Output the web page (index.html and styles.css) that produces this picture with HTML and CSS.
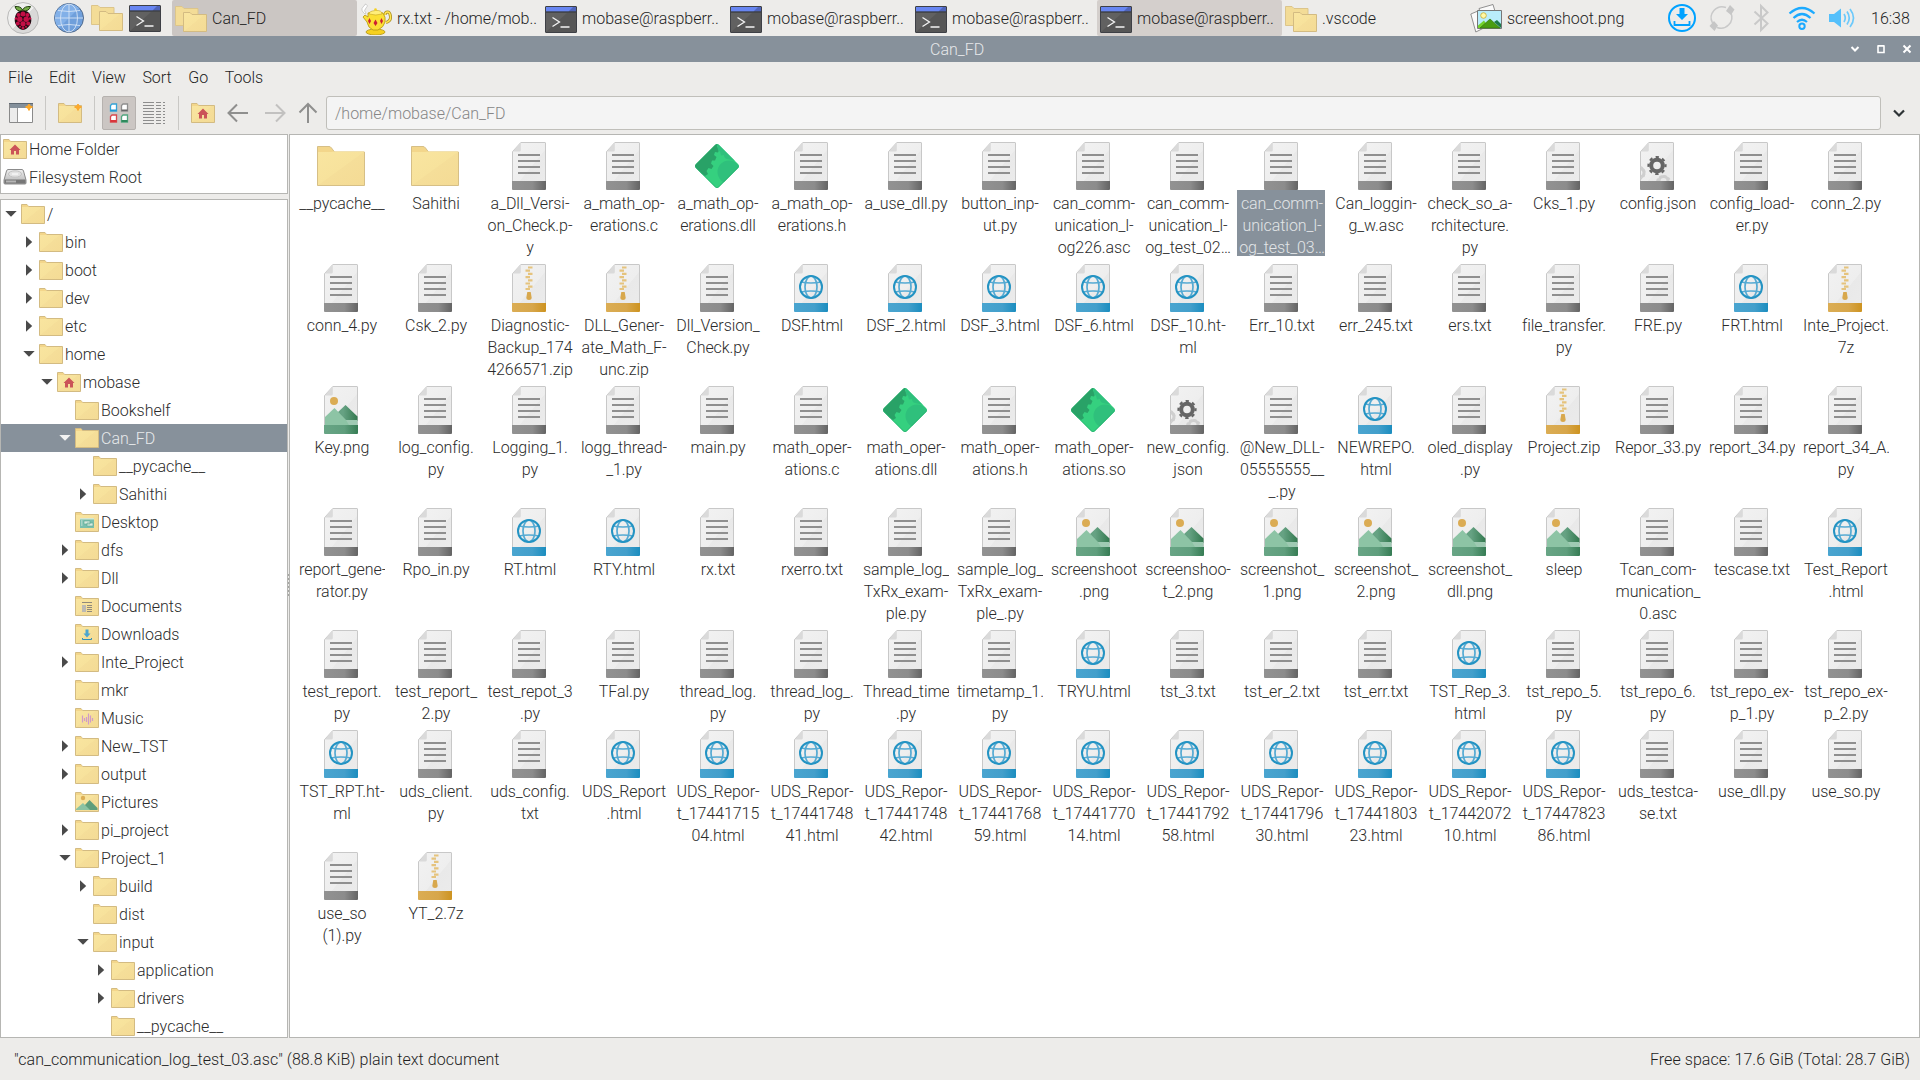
FILE: index.html
```html
<!DOCTYPE html>
<html lang="en">
<head>
<meta charset="utf-8">
<title>Can_FD</title>
<link rel="stylesheet" href="styles.css">
</head>
<body>
<svg class="defs" aria-hidden="true">
  <defs>
    <linearGradient id="g-paper" x1="0" y1="0" x2="1" y2="1"><stop offset="0" stop-color="#f2f2f2"/><stop offset=".58" stop-color="#eeeeee"/><stop offset=".59" stop-color="#e9e9e9"/><stop offset="1" stop-color="#ebebeb"/></linearGradient>
    <linearGradient id="g-folder" x1="0" y1="0" x2="1" y2="1"><stop offset="0" stop-color="#f9e5a0"/><stop offset=".5" stop-color="#f7e29c"/><stop offset=".51" stop-color="#f5de99"/><stop offset="1" stop-color="#f4db95"/></linearGradient>
    <linearGradient id="g-grey"><stop offset="0" stop-color="#929292"/><stop offset=".6" stop-color="#8c8c8c"/><stop offset="1" stop-color="#646464"/></linearGradient>
    <linearGradient id="g-blue"><stop offset="0" stop-color="#4aa5d0"/><stop offset=".6" stop-color="#439fcb"/><stop offset="1" stop-color="#1b8dbf"/></linearGradient>
    <linearGradient id="g-gold"><stop offset="0" stop-color="#dbad54"/><stop offset=".6" stop-color="#d7a64a"/><stop offset="1" stop-color="#cd9320"/></linearGradient>
    <linearGradient id="g-green"><stop offset="0" stop-color="#68a585"/><stop offset=".6" stop-color="#5f9e7d"/><stop offset="1" stop-color="#367c54"/></linearGradient>
    <linearGradient id="g-hill"><stop offset=".3" stop-color="#66a283"/><stop offset="1" stop-color="#33794f"/></linearGradient>
    <linearGradient id="g-disk" x1="0" y1="0" x2="0" y2="1"><stop offset="0" stop-color="#efefef"/><stop offset="1" stop-color="#b0b0b0"/></linearGradient>
    <linearGradient id="g-badge" x1="0" y1="0" x2="1" y2="1"><stop offset=".5" stop-color="#efefee"/><stop offset=".51" stop-color="#d9d9d8"/></linearGradient>
    <clipPath id="c-lib"><path d="M22 3q2-2 4 0l19 19q2 2 0 4L26 45q-2 2-4 0L3 26q-2-2 0-4z"/></clipPath>

    <symbol id="paper" viewBox="0 0 48 48">
      <path d="M15.8.5H40q.5 0 .5.5v40H7.500V9.600z" fill="url(#g-paper)" stroke="#c8c8c8"/>
      <path d="M15.800.8V8q0 1.500-1.500 1.500H7.800z" fill="#dadada"/>
    </symbol>
    <symbol id="doc" viewBox="0 0 48 48">
      <use href="#paper"/><path d="M7 39h34v8q0 1-1 1H8q-1 0-1-1z" fill="url(#g-grey)"/>
      <path d="M13 13h22M13 19h22M13 25h22M13 31h22" stroke="#8f8f8f" stroke-width="2"/>
    </symbol>
    <symbol id="web" viewBox="0 0 48 48">
      <use href="#paper"/><path d="M7 39h34v8q0 1-1 1H8q-1 0-1-1z" fill="url(#g-blue)"/>
      <g fill="none" stroke="#55aad3" stroke-width="1.700"><ellipse cx="24" cy="23" rx="6" ry="11"/><path d="M14 18q10 2 20 0M14 28q10-2 20 0"/></g>
      <circle cx="24" cy="23" r="11" fill="none" stroke="#2393c3" stroke-width="2"/>
    </symbol>
    <symbol id="zip" viewBox="0 0 48 48">
      <use href="#paper"/><path d="M7 39h34v8q0 1-1 1H8q-1 0-1-1z" fill="url(#g-gold)"/>
      <path d="M23 3.500h4.500M20.500 6.700H25M23 9.900h4.500M20.500 13.100H25M23 16.300h4.500M20.500 19.500H25M23 22.700h4.500M20.500 25H25" stroke="#e5c37d" stroke-width="2.200"/>
      <path d="M22.300 28h3.400l1 6q0 2-2.700 2t-2.700-2z" fill="#d8a84d"/>
    </symbol>
    <symbol id="img" viewBox="0 0 48 48">
      <use href="#paper"/>
      <circle cx="17" cy="15" r="4" fill="#dbac54"/>
      <path d="M28.500 19 40.500 30.500V35H20V27z" fill="url(#g-hill)"/>
      <path d="M8 34h32.500v5H8z" fill="#9fcab3"/><path d="M17.500 22 8 31v8h24l-3-5z" fill="#8dc4a5"/>
      <path d="M7 39h34v8q0 1-1 1H8q-1 0-1-1z" fill="url(#g-green)"/>
    </symbol>
    <symbol id="gear" viewBox="0 0 48 48">
      <use href="#paper"/>
      <g fill="none" stroke="#cfcfcf"><path d="M8 26.500a4.500 4.500 0 0 1 0 8.500" stroke-width="3"/><path d="M7.500 24.800a6.500 6.500 0 0 1 0 12" stroke-width="2" stroke-dasharray="2.500 2"/><path d="M26 39a4.500 4.500 0 0 1 9 0" stroke-width="3"/><path d="M24 39a6.700 6.700 0 0 1 13 0" stroke-width="2" stroke-dasharray="2.500 2"/></g>
      <circle cx="24" cy="23.500" r="5.800" fill="none" stroke="#666" stroke-width="4"/>
      <circle cx="24" cy="23.500" r="8.500" fill="none" stroke="#666" stroke-width="2.200" stroke-dasharray="3.340 3.340" stroke-dashoffset="1.670"/>
      <path d="M7 39h34v8q0 1-1 1H8q-1 0-1-1z" fill="url(#g-grey)"/>
    </symbol>
    <symbol id="dir" viewBox="0 0 48 48">
      <path d="M.5 43.500v-39H12q1.500 0 2.500 1.500l3 4H47.500v33.500z" fill="#f3d68b" stroke="#d6bf86"/>
      <path d="M1 43V10h12q2 0 3.500-.5H47V43z" fill="url(#g-folder)"/>
    </symbol>
    <symbol id="lib" viewBox="0 0 48 48">
      <g clip-path="url(#c-lib)">
        <path d="M0 0h48v48H0z" fill="#35d07f"/>
        <path d="M0 0h25l-1 5 2.500 2-1.500 3.500-3-.5-1 3 2.500 2-1.500 3.500h-3l-1 3 2.500 2.500-2 3-3-1-2 3 1.500 3-3 2-3-2L0 40z" fill="#29a267"/>
        <path d="M24 0h24v20L34 17q-3-1-3-4l-3 .5-1-4-2-1z" fill="#2fc07c"/>
        <circle cx="36" cy="30" r="11.500" fill="#2fc07c"/>
        <path d="M1 24.500 22 45q2 2 4 0L47 24" fill="none" stroke="#2bb573" stroke-width="1.500"/>
      </g>
    </symbol>

    <symbol id="dir-s" viewBox="0 0 24 24">
      <path d="M.5 21.500v-19H6l1.500 2h16v17z" fill="url(#g-folder)" stroke="#d3bb82"/><path d="M1 5V3h5l1.500 2z" fill="#f3d68b"/>
    </symbol>
    <symbol id="home-s" viewBox="0 0 24 24"><use href="#dir-s"/><path d="M12 7.500 17.500 13H16v4.500h-3V14h-2v3.500H8V13H6.500z" fill="#cb5358"/></symbol>
    <symbol id="desk-s" viewBox="0 0 24 24"><use href="#dir-s"/><path d="M5 8h14v10H5z" fill="#79bfae"/><path d="M5 8h14v1.500H5z" fill="#d6e7d2"/><path d="M9 11h6v3H9zM12 13h6v3h-6z" fill="#d9eae0" stroke="#5aa792" stroke-width=".6"/><path d="M6 11h1.500M6 13h1.500M6 15h1.500" stroke="#d9eae0"/></symbol>
    <symbol id="docs-s" viewBox="0 0 24 24"><use href="#dir-s"/><path d="M7 8.500h10M12 11.500h5M12 13.500h5M12 15.500h5M12 17.500h5" stroke="#8f897b"/><path d="M7 11h4v7H7z" fill="#bbb9b3"/></symbol>
    <symbol id="down-s" viewBox="0 0 24 24"><use href="#dir-s"/><path d="M10.500 7.500h3v4h2L12 15.500l-3.500-4h2z" fill="#4ba5cf"/><path d="M7.500 16v1.500h9V16" fill="none" stroke="#318fb9"/></symbol>
    <symbol id="music-s" viewBox="0 0 24 24"><use href="#dir-s"/><path d="M7.500 9.500v7M9.500 12v3M11.500 11v5M13.500 7.500v11M15.500 9.500v7M17.500 12v3" stroke="#cf9bc9" stroke-width="1.200"/></symbol>
    <symbol id="pics-s" viewBox="0 0 24 24"><use href="#dir-s"/><circle cx="8" cy="8" r="2.200" fill="#dcae55"/><path d="m14.500 10 8 8v2H10v-5z" fill="#5f9e7c"/><path d="M1 20v-1l7-6 7 7z" fill="#8cc3a3"/></symbol>
    <symbol id="disk-s" viewBox="0 0 24 24"><path d="M5 4.500h14q1 0 1.500 1.500L23 15v3q0 1-1 1H2q-1 0-1-1v-3L3.500 6Q4 4.500 5 4.500z" fill="url(#g-disk)" stroke="#8b8b8b"/><path d="M1.500 14.500h21V18q0 .5-.5.500H2q-.5 0-.5-.5z" fill="#777"/><path d="M3 15.500h10v2H3z" fill="#b5b5b5"/><ellipse cx="12" cy="9" rx="6.500" ry="3.200" fill="#e2e2e2" stroke="#c2c2c2"/><path d="M9 9h6" stroke="#fff"/></symbol>

    <symbol id="open" viewBox="0 0 18 14"><path d="M3.300 4h11.400L9 9.800z"/></symbol>
    <symbol id="shut" viewBox="0 0 18 14"><path d="M6 1.300v11.400L12.200 7z"/></symbol>

    <symbol id="folders" viewBox="0 0 32 32">
      <path d="M.5 22.500v-19H7l2 2h14v17z" fill="#f3dc97" stroke="#dcc58b"/><path d="M8.500 28.500v-19H15l2 2h14.500v17z" fill="url(#g-folder)" stroke="#d3bb82"/>
    </symbol>
    <symbol id="term" viewBox="0 0 32 32">
      <rect x=".5" y="3.500" width="31" height="26" rx=".5" fill="#565656" stroke="#3e4046"/><path d="M1 10h21L1 29z" fill="#616161"/>
      <path d="M1 4h30v4.500H1z" fill="#5065bb"/><path d="M1 4h27l-4.500 4.500H1z" fill="#6886f2"/><path d="M1 9h30" stroke="#35383f"/>
      <path d="m7.500 14.500 7 4.500-7 4.500M15.500 24h9" fill="none" stroke="#f4f4f4" stroke-width="1.300"/>
    </symbol>
  </defs>
</svg>

<header class="taskbar">
  <svg class="berry" viewBox="0 0 32 32"><circle cx="16" cy="16" r="15.500" fill="url(#g-badge)" stroke="#b9b9b8"/>
    <path d="M15.500 9Q9 9.500 8 4.500q6-.5 7.500 3.500Q17.500 4 23.500 4.500 22 9.500 16 9z" fill="#74ab46" stroke="#234010" stroke-width="1"/>
    <path d="M16 8.500c6 0 7.500 4 8 7.500 1.500 5-2.500 11-8 12-5.500-1-9.500-7-8-12 .5-3.500 2-7.500 8-7.500z" fill="#1f0a11"/>
    <g fill="#c40e46"><circle cx="16" cy="12" r="2.500"/><circle cx="11.500" cy="13" r="2"/><circle cx="20.500" cy="13" r="2"/><circle cx="12.800" cy="17.300" r="2.700"/><circle cx="19.200" cy="17.300" r="2.700"/><circle cx="16" cy="21.800" r="2.600"/><circle cx="9" cy="16.500" r="1.300"/><circle cx="23" cy="16.500" r="1.300"/><circle cx="10.800" cy="21.500" r="2"/><circle cx="21.200" cy="21.500" r="2"/><circle cx="16" cy="26" r="1.500"/><circle cx="13" cy="24.800" r="1"/><circle cx="19" cy="24.800" r="1"/></g></svg>
  <svg class="globe" viewBox="0 0 30 30"><circle cx="15" cy="15" r="14.500" fill="#6f9fdb" stroke="#526b8c"/><path d="M15 1A14 14 0 0 0 5 25L25 5Q21 1 15 1z" fill="#82b0e8"/><g fill="none" stroke="#d5e3f5" stroke-width=".9"><path d="M15 1v28M1 15h28M4 7.500q11 2 22 0M4 22.500q11-2 22 0"/><ellipse cx="15" cy="15" rx="8.500" ry="14"/></g></svg>
  <svg class="launch"><use href="#folders"/></svg>
  <svg class="launch term"><use href="#term"/></svg>
  <nav class="tasks">
    <a class="task current"><svg><use href="#folders"/></svg>Can_FD</a>
    <a class="task"><svg viewBox="0 0 32 32"><path d="M5 11Q0 7 3 4t2-3q4 1 1 4t0 5z" fill="#fff" stroke="#bdbdbd" stroke-width=".7"/><path d="M25 12q0-3 2.500-3t3 4.500-4.500 6" fill="none" stroke="#a98c1d" stroke-width="3"/><path d="M25 12q0-3 2.500-3t3 4.500-4.500 6" fill="none" stroke="#ffe551" stroke-width="1.500"/><ellipse cx="15.500" cy="29" rx="9.500" ry="3" fill="#f6d020" stroke="#b39410" stroke-width=".8"/><path d="M8 10q8-3 15 0 3 4 2 9t-7 8h-5q-5-2-6-8l-4-5 2-2 3 2z" fill="#fbdf35" stroke="#b39410" stroke-width=".8"/><path d="M9 11q0-3 6.500-3.500T22 11q-6 2-13 0z" fill="#ffee7a" stroke="#c5a31a" stroke-width=".6"/><circle cx="15.500" cy="6.500" r="1.300" fill="#f5d020"/><g fill="#cd2032"><path d="m9.500 15 1.500 3-1.500 3L8 18zM15.500 16.500l2 3.500-2 3-2-3zM21.500 15l1.500 3-1.500 3-1.500-3z"/></g></svg>rx.txt - /home/mob..</a>
    <a class="task"><svg><use href="#term"/></svg>mobase@raspberr..</a>
    <a class="task"><svg><use href="#term"/></svg>mobase@raspberr..</a>
    <a class="task"><svg><use href="#term"/></svg>mobase@raspberr..</a>
    <a class="task marked"><svg><use href="#term"/></svg>mobase@raspberr..</a>
    <a class="task"><svg><use href="#folders"/></svg>.vscode</a>
    <a class="task"><svg viewBox="0 0 32 32"><path d="m.8 11 12-5 5 17-12 6z" fill="#fafafa" stroke="#777" stroke-width=".8"/><path d="m9 5.500 14-4 5 17-14 4z" fill="#fafafa" stroke="#777" stroke-width=".8"/><path d="M7.500 7.500h24v18h-24z" fill="#b9edfb" stroke="#777"/><circle cx="13.500" cy="12.500" r="2.800" fill="#fff9a8" stroke="#c9a92b" stroke-width=".8"/><path d="m8 25 0-2.500 6-5 5 7.500z" fill="#73d22c"/><path d="m10 25 10-9 10 9z" fill="#4a9d12" stroke="#347a08" stroke-width=".7"/><path d="m24 19 3-2 4 4v4z" fill="#1e7a4a"/></svg>screenshoot.png</a>
  </nav>
  <div class="tray">
    <svg viewBox="0 0 30 30"><circle cx="15" cy="15" r="13" fill="none" stroke="#00a2ff" stroke-width="2"/><path d="M12.500 5h5v6h3.500l-6 6-6-6h3.500z" fill="#00a2ff"/><path d="M7.500 18v4h15v-4" fill="none" stroke="#00a2ff" stroke-width="1.800"/></svg>
    <svg viewBox="0 0 30 30"><path d="M5.500 20A11 11 0 0 1 19 4.500M24 10a11 11 0 0 1-14 14.500" fill="none" stroke="#c9c9c9" stroke-width="1.500"/><path d="m23 2 4.500 4.500L24 12l-5-4zM7 18l4 4.500L7.500 28 2.500 23z" fill="#c6c6c6"/></svg>
    <svg viewBox="0 0 30 30"><path d="m7.500 8.500 13 12-6.500 6.500V3l6.500 6.500-13 12" fill="none" stroke="#c9c9c9" stroke-width="2"/></svg>
    <svg viewBox="0 0 30 30"><g fill="none" stroke="#1caaff" stroke-width="2.200"><path d="M2.500 10.500q12.500-11 25 0M6.500 15q8.500-8 17 0M10 19q5-4.500 10 0"/><circle cx="15" cy="23.200" r="2.700" stroke-width="2"/></g></svg>
    <svg viewBox="0 0 30 30"><path d="M2 11h5l7-5.500v19L7 19H2z" fill="#55c0fb"/><path d="M17 11q2.500 4 0 8M20 8.500q4.500 6.500 0 13M23 6q7 9 0 18" fill="none" stroke="#6cc9fb" stroke-width="1.700"/></svg>
  </div>
  <time class="clock">16:38</time>
</header>

<div class="titlebar">
  <span class="caption">Can_FD</span>
  <svg viewBox="0 0 10 10"><path d="m1.500 3 3.500 3.500L8.500 3" fill="none" stroke="#fff" stroke-width="2"/></svg>
  <svg viewBox="0 0 10 10"><path d="M2 2h6v6.500H2zM2 1.800h6" fill="none" stroke="#fff" stroke-width="1.600"/></svg>
  <svg viewBox="0 0 10 10"><path d="m1.500 1.500 7 7m0-7-7 7" fill="none" stroke="#fff" stroke-width="2"/></svg>
</div>

<nav class="menu"><a>File</a><a>Edit</a><a>View</a><a>Sort</a><a>Go</a><a>Tools</a></nav>

<div class="toolbar">
  <svg class="b new" viewBox="0 0 24 24"><path d="M.5 2.500h23v19H.5z" fill="#fff" stroke="#8a8a8a"/><path d="M1 7h7.500v14H1z" fill="#ececec"/><path d="M8.500 7v14" stroke="#999"/><path d="M1 3h22v4H1z" fill="#84909b"/><path d="M0 2.500h24" stroke="#5f6973"/><path d="m20 3 1.200 2 2.300 1-2.300 1.200L20 9.500l-1.200-2.300L16.500 6l2.300-1z" fill="#fca92c" stroke="#fca92c"/></svg>
  <i class="sep"></i>
  <svg class="b mk" viewBox="0 0 24 24"><use href="#dir-s"/><path d="m20 3 1.200 2 2.300 1-2.300 1.200L20 9.500l-1.200-2.300L16.500 6l2.300-1z" fill="#fca92c" stroke="#fca92c"/></svg>
  <i class="sep two"></i>
  <span class="toggle"><svg viewBox="0 0 24 24"><g fill="#fff" stroke-width="1.300"><path d="M5 3h4.500v7h-6V4.500z" stroke="#35a3d6"/><path d="M16 3h4.500v7h-6V4.500z" stroke="#8e8e8e"/><path d="M5 14h4.500v7h-6v-5.500z" stroke="#d9494d"/><path d="M16 14h4.500v7h-6v-5.500z" stroke="#52a67f"/></g><path d="M3.500 8.500h6V10h-6z" fill="#2297d0"/><path d="M14.500 8.500h6V10h-6z" fill="#666"/><path d="M3.500 19h6v2h-6z" fill="#d9353b"/><path d="M14.500 19h6v2h-6z" fill="#2f8a5d"/></svg></span>
  <svg class="b list" viewBox="0 0 24 24"><g stroke="#8d8d8d"><path d="M1 1.500h11M1 4.500h11M1 7.500h11M1 10.500h11M1 13.500h11M1 16.500h11M1 19.500h11M1 22.500h11M14 1.500h5M14 4.500h5M14 7.500h5M14 10.500h5M14 13.500h5M14 16.500h5M14 19.500h5M14 22.500h5M21 1.500h2M21 4.500h2M21 7.500h2M21 10.500h2M21 13.500h2M21 16.500h2M21 19.500h2M21 22.500h2"/></g></svg>
  <i class="sep three"></i>
  <svg class="b home"><use href="#home-s"/></svg>
  <svg class="b" viewBox="0 0 24 24"><path d="M22 12H3M11 3.500 2.500 12l8.500 8.500" fill="none" stroke="#8f8f8e" stroke-width="2"/></svg>
  <svg class="b fwd" viewBox="0 0 24 24"><path d="M2 12h19M13 3.500l8.500 8.500-8.500 8.500" fill="none" stroke="#c2c1c0" stroke-width="2"/></svg>
  <svg class="b" viewBox="0 0 24 24"><path d="M12 22V3M3.500 11.500 12 3l8.500 8.500" fill="none" stroke="#8f8f8e" stroke-width="2"/></svg>
  <div class="path">/home/mobase/Can_FD</div>
  <svg class="drop" viewBox="0 0 12 12"><path d="m1 3.500 5 5 5-5" fill="none" stroke="#2e3436" stroke-width="2.200"/></svg>
</div>

<main class="panes">
  <aside class="side">
    <ul class="places">
      <li><svg><use href="#home-s"/></svg><span>Home Folder</span></li>
      <li><svg><use href="#disk-s"/></svg><span>Filesystem Root</span></li>
    </ul>
    <ul class="tree">
      <li class="l0"><svg class="tri"><use href="#open"/></svg><svg class="fi"><use href="#dir-s"/></svg><span>/</span></li>
      <li class="l1"><svg class="tri"><use href="#shut"/></svg><svg class="fi"><use href="#dir-s"/></svg><span>bin</span></li>
      <li class="l1"><svg class="tri"><use href="#shut"/></svg><svg class="fi"><use href="#dir-s"/></svg><span>boot</span></li>
      <li class="l1"><svg class="tri"><use href="#shut"/></svg><svg class="fi"><use href="#dir-s"/></svg><span>dev</span></li>
      <li class="l1"><svg class="tri"><use href="#shut"/></svg><svg class="fi"><use href="#dir-s"/></svg><span>etc</span></li>
      <li class="l1"><svg class="tri"><use href="#open"/></svg><svg class="fi"><use href="#dir-s"/></svg><span>home</span></li>
      <li class="l2"><svg class="tri"><use href="#open"/></svg><svg class="fi"><use href="#home-s"/></svg><span>mobase</span></li>
      <li class="l3"><svg class="tri"></svg><svg class="fi"><use href="#dir-s"/></svg><span>Bookshelf</span></li>
      <li class="l3 on"><svg class="tri"><use href="#open"/></svg><svg class="fi"><use href="#dir-s"/></svg><span>Can_FD</span></li>
      <li class="l4"><svg class="tri"></svg><svg class="fi"><use href="#dir-s"/></svg><span>__pycache__</span></li>
      <li class="l4"><svg class="tri"><use href="#shut"/></svg><svg class="fi"><use href="#dir-s"/></svg><span>Sahithi</span></li>
      <li class="l3"><svg class="tri"></svg><svg class="fi"><use href="#desk-s"/></svg><span>Desktop</span></li>
      <li class="l3"><svg class="tri"><use href="#shut"/></svg><svg class="fi"><use href="#dir-s"/></svg><span>dfs</span></li>
      <li class="l3"><svg class="tri"><use href="#shut"/></svg><svg class="fi"><use href="#dir-s"/></svg><span>Dll</span></li>
      <li class="l3"><svg class="tri"></svg><svg class="fi"><use href="#docs-s"/></svg><span>Documents</span></li>
      <li class="l3"><svg class="tri"></svg><svg class="fi"><use href="#down-s"/></svg><span>Downloads</span></li>
      <li class="l3"><svg class="tri"><use href="#shut"/></svg><svg class="fi"><use href="#dir-s"/></svg><span>Inte_Project</span></li>
      <li class="l3"><svg class="tri"></svg><svg class="fi"><use href="#dir-s"/></svg><span>mkr</span></li>
      <li class="l3"><svg class="tri"></svg><svg class="fi"><use href="#music-s"/></svg><span>Music</span></li>
      <li class="l3"><svg class="tri"><use href="#shut"/></svg><svg class="fi"><use href="#dir-s"/></svg><span>New_TST</span></li>
      <li class="l3"><svg class="tri"><use href="#shut"/></svg><svg class="fi"><use href="#dir-s"/></svg><span>output</span></li>
      <li class="l3"><svg class="tri"></svg><svg class="fi"><use href="#pics-s"/></svg><span>Pictures</span></li>
      <li class="l3"><svg class="tri"><use href="#shut"/></svg><svg class="fi"><use href="#dir-s"/></svg><span>pi_project</span></li>
      <li class="l3"><svg class="tri"><use href="#open"/></svg><svg class="fi"><use href="#dir-s"/></svg><span>Project_1</span></li>
      <li class="l4"><svg class="tri"><use href="#shut"/></svg><svg class="fi"><use href="#dir-s"/></svg><span>build</span></li>
      <li class="l4"><svg class="tri"></svg><svg class="fi"><use href="#dir-s"/></svg><span>dist</span></li>
      <li class="l4"><svg class="tri"><use href="#open"/></svg><svg class="fi"><use href="#dir-s"/></svg><span>input</span></li>
      <li class="l5"><svg class="tri"><use href="#shut"/></svg><svg class="fi"><use href="#dir-s"/></svg><span>application</span></li>
      <li class="l5"><svg class="tri"><use href="#shut"/></svg><svg class="fi"><use href="#dir-s"/></svg><span>drivers</span></li>
      <li class="l5"><svg class="tri"></svg><svg class="fi"><use href="#dir-s"/></svg><span>__pycache__</span></li>
    </ul>
  </aside>
  <div class="grip"><i></i></div>
  <ul class="files">
    <li><svg><use href="#dir"/></svg><p>__pycache__</p></li>
    <li><svg><use href="#dir"/></svg><p>Sahithi</p></li>
    <li><svg><use href="#doc"/></svg><p>a_Dll_Versi-<br>on_Check.p-<br>y</p></li>
    <li><svg><use href="#doc"/></svg><p>a_math_op-<br>erations.c</p></li>
    <li><svg><use href="#lib"/></svg><p>a_math_op-<br>erations.dll</p></li>
    <li><svg><use href="#doc"/></svg><p>a_math_op-<br>erations.h</p></li>
    <li><svg><use href="#doc"/></svg><p>a_use_dll.py</p></li>
    <li><svg><use href="#doc"/></svg><p>button_inp-<br>ut.py</p></li>
    <li><svg><use href="#doc"/></svg><p>can_comm-<br>unication_l-<br>og226.asc</p></li>
    <li><svg><use href="#doc"/></svg><p>can_comm-<br>unication_l-<br>og_test_02…</p></li>
    <li class="on"><svg><use href="#doc"/></svg><p>can_comm-<br>unication_l-<br>og_test_03…</p></li>
    <li><svg><use href="#doc"/></svg><p>Can_loggin-<br>g_w.asc</p></li>
    <li><svg><use href="#doc"/></svg><p>check_so_a-<br>rchitecture.<br>py</p></li>
    <li><svg><use href="#doc"/></svg><p>Cks_1.py</p></li>
    <li><svg><use href="#gear"/></svg><p>config.json</p></li>
    <li><svg><use href="#doc"/></svg><p>config_load-<br>er.py</p></li>
    <li><svg><use href="#doc"/></svg><p>conn_2.py</p></li>

    <li><svg><use href="#doc"/></svg><p>conn_4.py</p></li>
    <li><svg><use href="#doc"/></svg><p>Csk_2.py</p></li>
    <li><svg><use href="#zip"/></svg><p>Diagnostic-<br>Backup_174<br>4266571.zip</p></li>
    <li><svg><use href="#zip"/></svg><p>DLL_Gener-<br>ate_Math_F-<br>unc.zip</p></li>
    <li><svg><use href="#doc"/></svg><p>Dll_Version_<br>Check.py</p></li>
    <li><svg><use href="#web"/></svg><p>DSF.html</p></li>
    <li><svg><use href="#web"/></svg><p>DSF_2.html</p></li>
    <li><svg><use href="#web"/></svg><p>DSF_3.html</p></li>
    <li><svg><use href="#web"/></svg><p>DSF_6.html</p></li>
    <li><svg><use href="#web"/></svg><p>DSF_10.ht-<br>ml</p></li>
    <li><svg><use href="#doc"/></svg><p>Err_10.txt</p></li>
    <li><svg><use href="#doc"/></svg><p>err_245.txt</p></li>
    <li><svg><use href="#doc"/></svg><p>ers.txt</p></li>
    <li><svg><use href="#doc"/></svg><p>file_transfer.<br>py</p></li>
    <li><svg><use href="#doc"/></svg><p>FRE.py</p></li>
    <li><svg><use href="#web"/></svg><p>FRT.html</p></li>
    <li><svg><use href="#zip"/></svg><p>Inte_Project.<br>7z</p></li>

    <li><svg><use href="#img"/></svg><p>Key.png</p></li>
    <li><svg><use href="#doc"/></svg><p>log_config.<br>py</p></li>
    <li><svg><use href="#doc"/></svg><p>Logging_1.<br>py</p></li>
    <li><svg><use href="#doc"/></svg><p>logg_thread-<br>_1.py</p></li>
    <li><svg><use href="#doc"/></svg><p>main.py</p></li>
    <li><svg><use href="#doc"/></svg><p>math_oper-<br>ations.c</p></li>
    <li><svg><use href="#lib"/></svg><p>math_oper-<br>ations.dll</p></li>
    <li><svg><use href="#doc"/></svg><p>math_oper-<br>ations.h</p></li>
    <li><svg><use href="#lib"/></svg><p>math_oper-<br>ations.so</p></li>
    <li><svg><use href="#gear"/></svg><p>new_config.<br>json</p></li>
    <li><svg><use href="#doc"/></svg><p>@New_DLL-<br>05555555__<br>_.py</p></li>
    <li><svg><use href="#web"/></svg><p>NEWREPO.<br>html</p></li>
    <li><svg><use href="#doc"/></svg><p>oled_display<br>.py</p></li>
    <li><svg><use href="#zip"/></svg><p>Project.zip</p></li>
    <li><svg><use href="#doc"/></svg><p>Repor_33.py</p></li>
    <li><svg><use href="#doc"/></svg><p>report_34.py</p></li>
    <li><svg><use href="#doc"/></svg><p>report_34_A.<br>py</p></li>

    <li><svg><use href="#doc"/></svg><p>report_gene-<br>rator.py</p></li>
    <li><svg><use href="#doc"/></svg><p>Rpo_in.py</p></li>
    <li><svg><use href="#web"/></svg><p>RT.html</p></li>
    <li><svg><use href="#web"/></svg><p>RTY.html</p></li>
    <li><svg><use href="#doc"/></svg><p>rx.txt</p></li>
    <li><svg><use href="#doc"/></svg><p>rxerro.txt</p></li>
    <li><svg><use href="#doc"/></svg><p>sample_log_<br>TxRx_exam-<br>ple.py</p></li>
    <li><svg><use href="#doc"/></svg><p>sample_log_<br>TxRx_exam-<br>ple_.py</p></li>
    <li><svg><use href="#img"/></svg><p>screenshoot<br>.png</p></li>
    <li><svg><use href="#img"/></svg><p>screenshoo-<br>t_2.png</p></li>
    <li><svg><use href="#img"/></svg><p>screenshot_<br>1.png</p></li>
    <li><svg><use href="#img"/></svg><p>screenshot_<br>2.png</p></li>
    <li><svg><use href="#img"/></svg><p>screenshot_<br>dll.png</p></li>
    <li><svg><use href="#img"/></svg><p>sleep</p></li>
    <li><svg><use href="#doc"/></svg><p>Tcan_com-<br>munication_<br>0.asc</p></li>
    <li><svg><use href="#doc"/></svg><p>tescase.txt</p></li>
    <li><svg><use href="#web"/></svg><p>Test_Report<br>.html</p></li>

    <li><svg><use href="#doc"/></svg><p>test_report.<br>py</p></li>
    <li><svg><use href="#doc"/></svg><p>test_report_<br>2.py</p></li>
    <li><svg><use href="#doc"/></svg><p>test_repot_3<br>.py</p></li>
    <li><svg><use href="#doc"/></svg><p>TFal.py</p></li>
    <li><svg><use href="#doc"/></svg><p>thread_log.<br>py</p></li>
    <li><svg><use href="#doc"/></svg><p>thread_log_.<br>py</p></li>
    <li><svg><use href="#doc"/></svg><p>Thread_time<br>.py</p></li>
    <li><svg><use href="#doc"/></svg><p>timetamp_1.<br>py</p></li>
    <li><svg><use href="#web"/></svg><p>TRYU.html</p></li>
    <li><svg><use href="#doc"/></svg><p>tst_3.txt</p></li>
    <li><svg><use href="#doc"/></svg><p>tst_er_2.txt</p></li>
    <li><svg><use href="#doc"/></svg><p>tst_err.txt</p></li>
    <li><svg><use href="#web"/></svg><p>TST_Rep_3.<br>html</p></li>
    <li><svg><use href="#doc"/></svg><p>tst_repo_5.<br>py</p></li>
    <li><svg><use href="#doc"/></svg><p>tst_repo_6.<br>py</p></li>
    <li><svg><use href="#doc"/></svg><p>tst_repo_ex-<br>p_1.py</p></li>
    <li><svg><use href="#doc"/></svg><p>tst_repo_ex-<br>p_2.py</p></li>

    <li><svg><use href="#web"/></svg><p>TST_RPT.ht-<br>ml</p></li>
    <li><svg><use href="#doc"/></svg><p>uds_client.<br>py</p></li>
    <li><svg><use href="#doc"/></svg><p>uds_config.<br>txt</p></li>
    <li><svg><use href="#web"/></svg><p>UDS_Report<br>.html</p></li>
    <li><svg><use href="#web"/></svg><p>UDS_Repor-<br>t_17441715<br>04.html</p></li>
    <li><svg><use href="#web"/></svg><p>UDS_Repor-<br>t_17441748<br>41.html</p></li>
    <li><svg><use href="#web"/></svg><p>UDS_Repor-<br>t_17441748<br>42.html</p></li>
    <li><svg><use href="#web"/></svg><p>UDS_Repor-<br>t_17441768<br>59.html</p></li>
    <li><svg><use href="#web"/></svg><p>UDS_Repor-<br>t_17441770<br>14.html</p></li>
    <li><svg><use href="#web"/></svg><p>UDS_Repor-<br>t_17441792<br>58.html</p></li>
    <li><svg><use href="#web"/></svg><p>UDS_Repor-<br>t_17441796<br>30.html</p></li>
    <li><svg><use href="#web"/></svg><p>UDS_Repor-<br>t_17441803<br>23.html</p></li>
    <li><svg><use href="#web"/></svg><p>UDS_Repor-<br>t_17442072<br>10.html</p></li>
    <li><svg><use href="#web"/></svg><p>UDS_Repor-<br>t_17447823<br>86.html</p></li>
    <li><svg><use href="#doc"/></svg><p>uds_testca-<br>se.txt</p></li>
    <li><svg><use href="#doc"/></svg><p>use_dll.py</p></li>
    <li><svg><use href="#doc"/></svg><p>use_so.py</p></li>

    <li><svg><use href="#doc"/></svg><p>use_so<br>(1).py</p></li>
    <li><svg><use href="#zip"/></svg><p>YT_2.7z</p></li>
  </ul>
</main>

<footer class="status"><span>"can_communication_log_test_03.asc" (88.8 KiB) plain text document</span><span>Free space: 17.6 GiB (Total: 28.7 GiB)</span></footer>
</body>
</html>
```
FILE: styles.css
```css
* { box-sizing: border-box; }
body { margin: 0; width: 1920px; height: 1080px; overflow: hidden; display: flex; flex-direction: column; background: #edecea; color: #1e1e1e; font: 300 16px/22px Roboto, sans-serif; white-space: nowrap; }
ul, p { margin: 0; padding: 0; list-style: none; }
svg { display: block; flex: none; }
.defs { width: 0; height: 0; }

.taskbar { height: 36px; flex: none; display: flex; align-items: center; padding-left: 7px; }
.berry { width: 32px; height: 32px; }
.globe { width: 30px; height: 30px; margin-left: 15px; }
.launch { width: 32px; height: 32px; margin-left: 7px; }
.launch.term { margin-left: 6px; }
.tasks { display: flex; margin-left: 11px; width: 1493px; }
.task { width: 185px; height: 36px; padding: 1px 0 0 3px; display: flex; align-items: center; gap: 5px; border-radius: 2px; }
.task svg { width: 32px; height: 32px; }
.task.current { background: #cbc6c3; }
.task.marked { background: #d4cfcc; }
.tray { display: flex; width: 206px; gap: 10px; padding-left: 2px; }
.tray svg { width: 30px; height: 30px; }
.clock { padding-top: 1px; }

.titlebar { height: 26px; flex: none; background: #87919b; color: #e6e8ea; display: flex; align-items: center; gap: 16px; padding-right: 8px; }
.caption { flex: 1; padding: 1px 0 0 930px; }
.titlebar svg { width: 10px; height: 10px; }

.menu { height: 31px; flex: none; display: flex; gap: 16.5px; padding: 5px 0 0 8px; }

.toolbar { height: 41px; flex: none; display: flex; align-items: center; padding: 0 0 1px 9px; }
.b { width: 24px; height: 24px; }
.sep { width: 1px; height: 34px; background: #c9c8c5; margin: 0 12px; }
.sep.two { margin: 0 7px 0 12px; }
.sep.three { margin: 0 12px; }
.toggle { width: 34px; height: 34px; display: flex; align-items: center; justify-content: center; background: #cbc6c3; border: 1px solid #b6b2af; border-radius: 2px; }
.toggle svg { width: 24px; height: 24px; }
.list { margin-left: 6px; }
.home { margin-right: 11px; }
.fwd { margin: 0 9px 0 13px; }
.path { width: 1555px; height: 34px; margin-left: 6px; padding: 6px 8px 4px; border: 1px solid #c0bfba; border-radius: 3px; background: #f4f4f4; color: #868686; }
.drop { width: 12px; height: 12px; margin-left: 12px; }

.panes { height: 904px; flex: none; display: flex; color: #2b2b2b; }
.side { width: 288px; display: flex; flex-direction: column; gap: 5px; }
.side span { padding-top: 2px; }
.places { height: 60px; background: #fff; border: 1px solid #b6b6b3; }
.places li { height: 28px; display: flex; align-items: center; padding-left: 2px; gap: 2px; }
.places svg, .fi { width: 24px; height: 24px; }
.tree { flex: 1; min-height: 0; background: #fff; border: 1px solid #b6b6b3; overflow: hidden; }
.tree li { height: 28px; display: flex; align-items: center; }
.tri { width: 18px; height: 14px; margin-right: 1px; fill: #4a4a4a; }
.fi { margin-right: 2px; }
.l0 { padding-left: 1px; }
.l1 { padding-left: 19px; }
.l2 { padding-left: 37px; }
.l3 { padding-left: 55px; }
.l4 { padding-left: 73px; }
.l5 { padding-left: 91px; }
.tree .on { background: #87919b; color: #e8eaeb; }
.tree .on .tri { fill: #f2f2f2; }
.grip { width: 1px; display: flex; align-items: center; }
.grip i { width: 1px; height: 24px; background: repeating-linear-gradient(#a5a5a2 0 2px, transparent 2px 4px); }

.files { flex: 1; display: grid; grid-template-columns: repeat(17, 94px); align-content: start; align-items: start; row-gap: 8px; padding: 7px 0 0 4px; background: #fff; border: 1px solid #b6b6b3; }
.files li { width: 94px; padding: 0 3px; }
.files svg { width: 48px; height: 48px; margin: 0 auto; }
.files p { width: 88px; padding: 3px 0 0 2px; margin-bottom: -3px; text-align: center; letter-spacing: -.06px; overflow: hidden; }
.files .on p { background: linear-gradient(#87919b, #87919b) 0 0 / 100% calc(100% - 3px) no-repeat; color: #e2e5e7; }

.status { height: 42px; flex: none; display: flex; align-items: center; justify-content: space-between; padding: 2px 10px 0 14px; letter-spacing: .06px; }
```
